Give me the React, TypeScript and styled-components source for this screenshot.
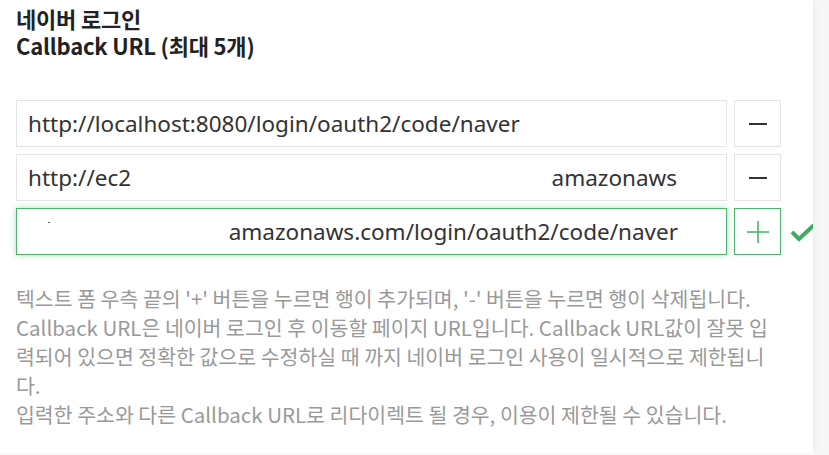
import React from 'react';
import styled, { createGlobalStyle } from 'styled-components';

const GlobalStyle = createGlobalStyle`
  body {
    margin: 0;
    background: #f7f7f7;
    font-family: "Noto Sans CJK KR", "Noto Sans", sans-serif;
  }
`;

const Card = styled.div`
  width: 813px;
  height: 453px;
  box-sizing: border-box;
  padding: 5px 16px 0 16px;
  background: #fff;
  box-shadow: 1px 0 6px rgba(0, 0, 0, 0.06);
  overflow: hidden;
`;

const Title = styled.h3`
  margin: 0;
  font-size: 22px;
  line-height: 27px;
  font-weight: 700;
  letter-spacing: -0.2px;
  color: #222;
`;

const TitleLine = styled.span`
  display: block;
  height: 27px;
`;

const UrlList = styled.div`
  margin-top: 41px;
  display: flex;
  flex-direction: column;
  gap: 7px;
`;

const Row = styled.div`
  display: flex;
  align-items: center;
  gap: 7px;
`;

const Field = styled.div<{ $active?: boolean }>`
  flex: none;
  width: 711px;
  height: 47px;
  box-sizing: border-box;
  display: flex;
  align-items: center;
  padding: 0 11px;
  border: 1px solid ${(p) => (p.$active ? '#4cb46b' : '#e4e4e4')};
  box-shadow: ${(p) => (p.$active ? '0 0 6px rgba(76, 180, 107, 0.45)' : 'none')};
  font-family: "Noto Sans", "Noto Sans CJK KR", sans-serif;
  font-size: 22.5px;
  color: #333;
  white-space: nowrap;
`;

const Tail = styled.span<{ $pad: number }>`
  margin-left: auto;
  padding-right: ${(p) => p.$pad}px;
`;

const Dot = styled.span`
  margin-left: 20px;
  margin-top: -18px;
  width: 2px;
  height: 1px;
  background: #555;
`;

const SquareButton = styled.button<{ $add?: boolean }>`
  flex: none;
  width: 47px;
  height: 47px;
  padding: 0;
  box-sizing: border-box;
  display: flex;
  align-items: center;
  justify-content: center;
  background: #fff;
  border: 1px solid ${(p) => (p.$add ? '#4cb46b' : '#e4e4e4')};
  color: ${(p) => (p.$add ? '#4cb46b' : '#333')};
  cursor: pointer;
`;

const Check = styled.svg`
  margin-left: 2px;
  flex: none;
`;

const Notes = styled.div`
  margin-top: 29px;
  width: 756px;
  font-size: 20.5px;
  line-height: 29px;
  color: #999;
  word-break: break-all;
`;

const Note = styled.p`
  margin: 0;
`;

const Sign: React.FC<{ plus?: boolean }> = ({ plus }) =>
  plus ? (
    <svg width="22" height="22" viewBox="0 0 22 22">
      <line x1="0" y1="11" x2="22" y2="11" stroke="currentColor" strokeWidth="1.6" />
      <line x1="11" y1="0" x2="11" y2="22" stroke="currentColor" strokeWidth="1.6" />
    </svg>
  ) : (
    <svg width="18" height="4" viewBox="0 0 18 4">
      <line x1="0" y1="2" x2="18" y2="2" stroke="currentColor" strokeWidth="2" />
    </svg>
  );

const App: React.FC = () => (
  <>
    <GlobalStyle />
    <Card>
      <Title>
        <TitleLine>네이버 로그인</TitleLine>
        <TitleLine>Callback URL (최대 5개)</TitleLine>
      </Title>
      <UrlList>
        <Row>
          <Field>http://localhost:8080/login/oauth2/code/naver</Field>
          <SquareButton>
            <Sign />
          </SquareButton>
        </Row>
        <Row>
          <Field>
            http://ec2
            <Tail $pad={38}>amazonaws</Tail>
          </Field>
          <SquareButton>
            <Sign />
          </SquareButton>
        </Row>
        <Row>
          <Field $active>
            <Dot />
            <Tail $pad={37}>amazonaws.com/login/oauth2/code/naver</Tail>
          </Field>
          <SquareButton $add>
            <Sign plus />
          </SquareButton>
          <Check width="26" height="20" viewBox="0 0 26 20">
            <path d="M2 10 L9 17 L24 3" fill="none" stroke="#3dab60" strokeWidth="4" />
          </Check>
        </Row>
      </UrlList>
      <Notes>
        <Note>텍스트 폼 우측 끝의 '+' 버튼을 누르면 행이 추가되며, '-' 버튼을 누르면 행이 삭제됩니다.</Note>
        <Note>
          Callback URL은 네이버 로그인 후 이동할 페이지 URL입니다. Callback URL값이 잘못 입력되어 있으면 정확한 값으로
          수정하실 때 까지 네이버 로그인 사용이 일시적으로 제한됩니다.
        </Note>
        <Note>입력한 주소와 다른 Callback URL로 리다이렉트 될 경우, 이용이 제한될 수 있습니다.</Note>
      </Notes>
    </Card>
  </>
);

export default App;
